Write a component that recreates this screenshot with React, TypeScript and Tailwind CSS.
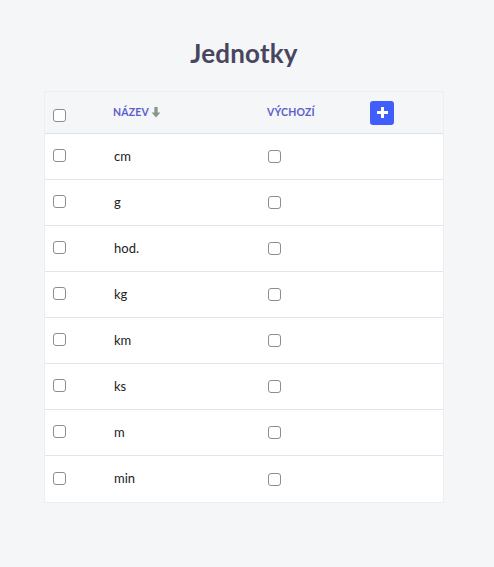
import React from 'react'

const units = ['cm', 'g', 'hod.', 'kg', 'km', 'ks', 'm', 'min']

function Box() {
  return <div className="w-[13px] h-[13px] rounded-[3px] border border-[#8d8d8d] bg-white" />
}

export default function App() {
  return (
    <div className="min-h-[567px] bg-[#f5f6f8] pt-[37px] pb-[66px]" style={{ fontFamily: 'Lato, "Noto Sans", sans-serif' }}>
      <h1 className="text-center text-[26px] leading-[32px] font-bold text-[#48465f] tracking-[0.2px] pr-[6px]">Jednotky</h1>

      <div className="ml-[44px] w-[400px] mt-[22px] bg-white border border-[#eceef2]">
        {/* hlavička */}
        <div className="grid grid-cols-[68px_154px_103px_1fr] h-[42px] items-center bg-[#f5f6f8] border-b border-[#dce2ec]">
          <div className="pl-[8px] pt-[5px]"><Box /></div>
          <div className="flex items-center gap-[2px] text-[10.5px] font-bold text-[#5a5fcc] tracking-[0.2px]">
            NÁZEV
            <svg width="10" height="11" viewBox="0 0 9 10" className="mt-[-1px]">
              <path d="M3 0h3v5h2.5L4.5 9.5 0.5 5H3z" fill="#8b9590" />
            </svg>
          </div>
          <div className="text-[10.5px] font-bold text-[#5a5fcc] tracking-[0.2px]">VÝCHOZÍ</div>
          <div>
            <button type="button" className="w-[24px] h-[24px] rounded-[3px] bg-[#3f5efb] flex items-center justify-center">
              <svg width="13" height="13" viewBox="0 0 13 13">
                <path d="M6.5 1v11M1 6.5h11" stroke="white" strokeWidth="3" />
              </svg>
            </button>
          </div>
        </div>

        {units.map((u, i) => (
          <div
            key={u}
            className={
              'grid grid-cols-[68px_154px_103px_1fr] h-[46px] items-center ' +
              (i < units.length - 1 ? 'border-b border-[#e1e4e9]' : '')
            }
          >
            <div className="pl-[8px] pb-[2px]"><Box /></div>
            <div className="text-[13px] text-[#222] pl-[1px]">{u}</div>
            <div className="pl-[1px]"><Box /></div>
            <div />
          </div>
        ))}
      </div>
    </div>
  )
}
